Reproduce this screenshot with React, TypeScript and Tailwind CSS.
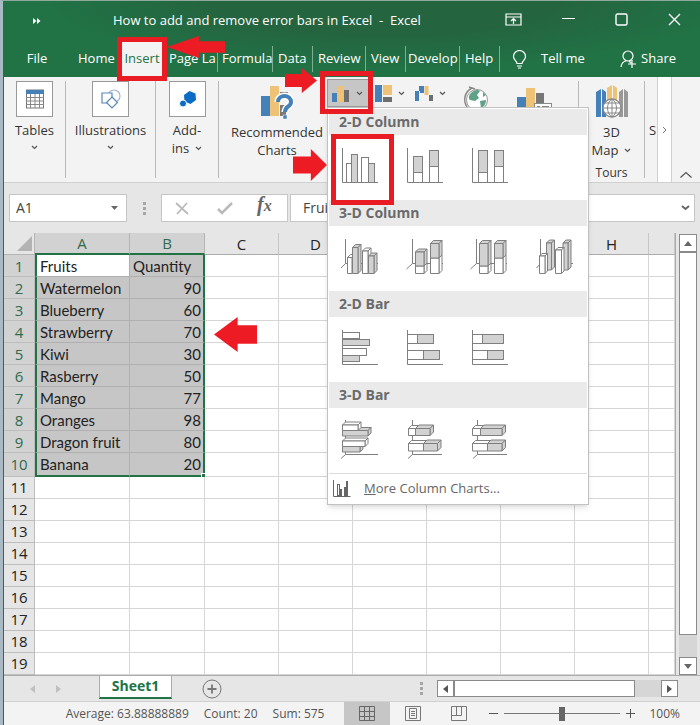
import type { ReactNode } from "react";

const fruits: [string, number][] = [
    ["Watermelon", 90],
    ["Blueberry", 60],
    ["Strawberry", 70],
    ["Kiwi", 30],
    ["Rasberry", 50],
    ["Mango", 77],
    ["Oranges", 98],
    ["Dragon fruit", 80],
    ["Banana", 20],
];

const cells: (string | number)[][] = [["Fruits", "Quantity"], ...fruits];
const columns = ["A", "B", "C", "D", "E", "F", "G", "H", ""];
const rows = Array.from({ length: 19 }, (_, i) => i + 1);

const tabs = [
    { label: "Page La", width: "w-[50px] pl-px" },
    { label: "Formula", width: "w-[55px] pl-1" },
    { label: "Data", width: "w-10 pl-[5px]" },
    { label: "Review", width: "w-[53px] pl-[5px]" },
    { label: "View", width: "w-10 pl-[5px]" },
    { label: "Develop", width: "w-[54px] pl-0.5" },
    { label: "Help", width: "w-10 pl-[5px]" },
];

const STROKE = "#7f7f7f";
const GRAY = "#d2d2d2";

function Chevron({ className = "" }: { className?: string }) {
    return (
        <svg width="7" height="5" viewBox="0 0 7 5" className={`inline-block ${className}`}>
            <path d="M1 1l2.5 2.5L6 1" fill="none" stroke="#555" strokeWidth="1.2" />
        </svg>
    );
}

function Arrow({ className, flip = false }: { className: string; flip?: boolean }) {
    return (
        <svg viewBox="0 0 40 34" preserveAspectRatio="none" className={`pointer-events-none absolute z-30 ${className}`}>
            <path
                d={flip ? "M0 17L22 0V8H40V26H22V34Z" : "M40 17L21 0V8H0V26H21V34Z"}
                fill="#ed1c24"
            />
        </svg>
    );
}

// Chart thumbnails
function Rect({ x, y, x2, y2, fill = "#fff" }: { x: number; y: number; x2: number; y2: number; fill?: string }) {
    return <rect x={x} y={y} width={x2 - x} height={y2 - y} fill={fill} stroke={STROKE} />;
}

function Box({ x, y, x2, y2, fill = "#fff", d = 3 }: { x: number; y: number; x2: number; y2: number; fill?: string; d?: number }) {
    return (
        <g fill={fill} stroke={STROKE} strokeLinejoin="round">
            <path d={`M${x} ${y}l${d} ${-d}H${x2 + d}L${x2} ${y}Z`} />
            <path d={`M${x2} ${y}l${d} ${-d}V${y2 - d}L${x2} ${y2}Z`} />
            <rect x={x} y={y} width={x2 - x} height={y2 - y} />
        </g>
    );
}

function Axis({ d }: { d: string }) {
    return <path d={d} fill="none" stroke={STROKE} />;
}

const sections: { title: string; items: { name: string; art: ReactNode }[] }[] = [
    {
        title: "2-D Column",
        items: [
            {
                name: "Clustered Column",
                art: (
                    <>
                        <Rect x={6.5} y={16.5} x2={11.5} y2={35.5} />
                        <Rect x={11.5} y={7.5} x2={17.5} y2={35.5} fill={GRAY} />
                        <Rect x={21.5} y={10.5} x2={28.5} y2={35.5} />
                        <Rect x={28.5} y={16.5} x2={34.5} y2={35.5} fill={GRAY} />
                        <Axis d="M2.5 1V35.5H38" />
                    </>
                ),
            },
            {
                name: "Stacked Column",
                art: (
                    <>
                        <Rect x={8.5} y={9.5} x2={17.5} y2={25.5} fill={GRAY} />
                        <Rect x={8.5} y={25.5} x2={17.5} y2={35.5} />
                        <Rect x={24.5} y={3.5} x2={33.5} y2={19.5} fill={GRAY} />
                        <Rect x={24.5} y={19.5} x2={33.5} y2={35.5} />
                        <Axis d="M2.5 1V35.5H38" />
                    </>
                ),
            },
            {
                name: "100% Stacked Column",
                art: (
                    <>
                        <Rect x={8.5} y={3.5} x2={17.5} y2={25.5} fill={GRAY} />
                        <Rect x={8.5} y={25.5} x2={17.5} y2={35.5} />
                        <Rect x={24.5} y={3.5} x2={33.5} y2={19.5} fill={GRAY} />
                        <Rect x={24.5} y={19.5} x2={33.5} y2={35.5} />
                        <Axis d="M2.5 1V35.5H38" />
                    </>
                ),
            },
        ],
    },
    {
        title: "3-D Column",
        items: [
            {
                name: "3-D Clustered Column",
                art: (
                    <>
                        <Axis d="M5.5 1V25.5L1 30M5.5 25.5H38" />
                        <Box x={7.5} y={19.5} x2={12} y2={35.5} />
                        <Box x={12.5} y={9.5} x2={18} y2={35.5} fill={GRAY} />
                        <Box x={22.5} y={13} x2={28} y2={35.5} />
                        <Box x={28.5} y={18} x2={34} y2={35.5} fill={GRAY} />
                    </>
                ),
            },
            {
                name: "3-D Stacked Column",
                art: (
                    <>
                        <Axis d="M7.5 1V25.5L1.5 31M7.5 25.5H38" />
                        <Box x={10.5} y={28} x2={19} y2={35.5} />
                        <Box x={10.5} y={14} x2={19} y2={28} fill={GRAY} />
                        <Box x={25.5} y={20} x2={34} y2={35.5} />
                        <Box x={25.5} y={5.5} x2={34} y2={20} fill={GRAY} />
                    </>
                ),
            },
            {
                name: "3-D 100% Stacked Column",
                art: (
                    <>
                        <Axis d="M7.5 1V25.5L1.5 31M7.5 25.5H38" />
                        <Box x={10.5} y={28} x2={19} y2={35.5} />
                        <Box x={10.5} y={5.5} x2={19} y2={28} fill={GRAY} />
                        <Box x={25.5} y={20} x2={34} y2={35.5} />
                        <Box x={25.5} y={5.5} x2={34} y2={20} fill={GRAY} />
                    </>
                ),
            },
            {
                name: "3-D Column",
                art: (
                    <>
                        <Axis d="M6.5 1V25.5L2.5 30M6.5 25.5H39" />
                        <Box x={12.5} y={5} x2={17.5} y2={32} fill={GRAY} />
                        <Box x={29} y={5} x2={34} y2={32} fill={GRAY} />
                        <Box x={5.5} y={18} x2={11} y2={35.5} d={2.5} />
                        <Box x={21.5} y={12} x2={27.5} y2={35.5} d={2.5} />
                    </>
                ),
            },
        ],
    },
    {
        title: "2-D Bar",
        items: [
            {
                name: "Clustered Bar",
                art: (
                    <>
                        <Rect x={2.5} y={3.5} x2={19.5} y2={9.5} />
                        <Rect x={2.5} y={10.5} x2={29.5} y2={16.5} fill={GRAY} />
                        <Rect x={2.5} y={19.5} x2={26.5} y2={26.5} />
                        <Rect x={2.5} y={26.5} x2={19.5} y2={32.5} fill={GRAY} />
                        <Axis d="M2.5 1V35.5H38" />
                    </>
                ),
            },
            {
                name: "Stacked Bar",
                art: (
                    <>
                        <Rect x={2.5} y={5.5} x2={12.5} y2={14.5} />
                        <Rect x={12.5} y={5.5} x2={28.5} y2={14.5} fill={GRAY} />
                        <Rect x={2.5} y={21.5} x2={18.5} y2={30.5} />
                        <Rect x={18.5} y={21.5} x2={34.5} y2={30.5} fill={GRAY} />
                        <Axis d="M2.5 1V35.5H38" />
                    </>
                ),
            },
            {
                name: "100% Stacked Bar",
                art: (
                    <>
                        <Rect x={2.5} y={5.5} x2={12.5} y2={14.5} />
                        <Rect x={12.5} y={5.5} x2={33.5} y2={14.5} fill={GRAY} />
                        <Rect x={2.5} y={21.5} x2={17.5} y2={30.5} />
                        <Rect x={17.5} y={21.5} x2={33.5} y2={30.5} fill={GRAY} />
                        <Axis d="M2.5 1V35.5H38" />
                    </>
                ),
            },
        ],
    },
    {
        title: "3-D Bar",
        items: [
            {
                name: "3-D Clustered Bar",
                art: (
                    <>
                        <Axis d="M5.5 0V34.5L1 38.5M5.5 34.5H38" />
                        <Box x={2.5} y={26.5} x2={20} y2={32} fill={GRAY} />
                        <Box x={2.5} y={21} x2={25} y2={26.5} />
                        <Box x={2.5} y={10.5} x2={28} y2={16} fill={GRAY} />
                        <Box x={2.5} y={5} x2={18} y2={10.5} />
                    </>
                ),
            },
            {
                name: "3-D Stacked Bar",
                art: (
                    <>
                        <Axis d="M7.5 0V34.5L3 38.5M7.5 34.5H37" />
                        <Box x={3.5} y={23.5} x2={18.5} y2={31} />
                        <Box x={18.5} y={23.5} x2={32.5} y2={31} fill={GRAY} d={3.5} />
                        <Box x={3.5} y={8.5} x2={10.5} y2={15.5} />
                        <Box x={10.5} y={8.5} x2={25} y2={15.5} fill={GRAY} d={3.5} />
                    </>
                ),
            },
            {
                name: "3-D 100% Stacked Bar",
                art: (
                    <>
                        <Axis d="M7.5 0V34.5L3 38.5M7.5 34.5H37" />
                        <Box x={2.5} y={23.5} x2={17.5} y2={31} />
                        <Box x={17.5} y={23.5} x2={32} y2={31} fill={GRAY} d={3.5} />
                        <Box x={2.5} y={8.5} x2={10.5} y2={15.5} />
                        <Box x={10.5} y={8.5} x2={32} y2={15.5} fill={GRAY} d={3.5} />
                    </>
                ),
            },
        ],
    },
];

function ChartMenu() {
    return (
        <div className="absolute top-full left-0 z-20 w-[262px] border border-[#c2c2c2] bg-white p-px shadow-md">
            {sections.map((section, i) => (
                <section key={section.title}>
                    <h3 className="h-[26px] bg-[#eaeaea] pl-[10px] text-sm leading-[26px] font-bold text-[#6a6a6a]">
                        {section.title}
                    </h3>
                    <div className="flex h-[65px]">
                        {section.items.map((entry, j) => (
                            <button key={entry.name} aria-label={entry.name} className="relative flex w-[65px] pt-3 pl-[11px]">
                                <svg width="40" height="40" viewBox="0 0 40 40">
                                    {entry.art}
                                </svg>
                                {i === 0 && j === 0 && (
                                    <>
                                        <span className="absolute -top-px left-0.5 h-[71px] w-[63px] border-[5px] border-[#e91c24]" />
                                        <Arrow className="top-[14px] -left-9 h-8 w-[34px]" />
                                    </>
                                )}
                            </button>
                        ))}
                    </div>
                </section>
            ))}
            <button className="flex h-[30px] w-full items-center border-t border-[#dcdcdc] pl-[3px] text-[13px] text-[#666]">
                <svg width="19" height="17" viewBox="0 0 19 17" className="mr-[13px]" fill="#8a8a8a" stroke="#666">
                    <path d="M1.5 0V16.5H18.5" fill="none" />
                    <rect x="5.5" y="4.5" width="2" height="11" fill="#fff" />
                    <rect x="8.5" y="9.5" width="1" height="6" />
                    <rect x="12.5" y="7.5" width="1" height="8" fill="#fff" />
                    <rect x="14.5" y="1.5" width="1" height="14" />
                </svg>
                <span>
                    <span className="underline">M</span>ore Column Charts...
                </span>
            </button>
        </div>
    );
}

function TitleBar() {
    return (
        <header className="bg-[#217346] bg-[radial-gradient(ellipse_at_55%_0%,#24643f_30%,#217346_65%)] text-[13px] text-white">
            <div className="flex h-10 items-center pl-[29px]">
                <svg width="8" height="6" viewBox="0 0 8 6" fill="#fff">
                    <path d="M0 0l3.500 3L0 6zM4 0l3.500 3L4 6z" />
                </svg>
                <h1 className="flex-1 pl-[72px] whitespace-pre">How to add and remove error bars in Excel  -  Excel</h1>
                <div className="flex items-center gap-10 pr-[19px] pb-1">
                    <button aria-label="Ribbon Display Options">
                        <svg width="17" height="13" viewBox="0 0 17 13" fill="none" stroke="#fff" strokeWidth="1.2">
                            <path d="M1 1h15v11H1zM1 4h15M8.500 11V5.500M6 8l2.500-2.500L11 8" />
                        </svg>
                    </button>
                    <button aria-label="Minimize">
                        <svg width="13" height="13" viewBox="0 0 13 13" stroke="#fff">
                            <path d="M0 5.500h13" />
                        </svg>
                    </button>
                    <button aria-label="Maximize">
                        <svg width="13" height="13" viewBox="0 0 13 13" fill="none" stroke="#fff" strokeWidth="1.4">
                            <rect x="1" y="1" width="11" height="11" rx="1.5" />
                        </svg>
                    </button>
                    <button aria-label="Close">
                        <svg width="13" height="13" viewBox="0 0 13 13" stroke="#fff" strokeWidth="1.3">
                            <path d="M1 1l11 11M12 1L1 12" />
                        </svg>
                    </button>
                </div>
            </div>
            <nav className="flex h-9 items-center">
                <button className="w-[66px] text-center">File</button>
                <button className="w-[49px] pl-2 text-left">Home</button>
                <button className="relative mr-[3px] flex h-full w-[46px] items-center justify-center bg-[#f3f3f3] text-[#217346]">
                    Insert
                    <span className="absolute -inset-x-0.5 -top-[4px] -bottom-1 z-10 border-[5px] border-[#e91c24]" />
                    <Arrow flip className="-top-[5px] left-[48px] h-[22px] w-[58px]" />
                </button>
                {tabs.map((tab) => (
                    <button
                        key={tab.label}
                        className={`h-[26px] border-r border-[#7fae93] text-left whitespace-nowrap ${tab.width}`}
                    >
                        {tab.label}
                    </button>
                ))}
                <button className="ml-3 flex items-center gap-[14px] whitespace-nowrap">
                    <svg width="15" height="19" viewBox="0 0 15 19" fill="none" stroke="#fff" strokeWidth="1.2">
                        <path d="M5 13.500C5 11 1.500 10 1.500 6.500a6 6 0 0 1 12 0C13.500 10 10 11 10 13.500zM5 16h5M6 18h3" />
                    </svg>
                    Tell me
                </button>
                <button className="mr-6 ml-auto flex items-center gap-1">
                    <svg width="17" height="18" viewBox="0 0 17 18" fill="none" stroke="#fff" strokeWidth="1.2">
                        <circle cx="8" cy="6" r="5" />
                        <path d="M1 17c.5-4 2-5.500 5-6M9 11l2 2M8 14h8M12 10v8" />
                    </svg>
                    Share
                </button>
            </nav>
        </header>
    );
}

function Group({ label, children, className }: { label: ReactNode; children: ReactNode; className: string }) {
    return (
        <button className={`my-1 flex flex-col items-center border-r border-[#b9b9b9] ${className}`}>
            <span className="flex h-9 w-[37px] items-center justify-center border border-[#999] bg-white">{children}</span>
            <span className="flex flex-col items-center pt-1 leading-[18px]">{label}</span>
        </button>
    );
}

function Ribbon() {
    return (
        <div className="flex h-[106px] border-b border-[#d0d0d0] bg-[#f3f3f3] text-[13px] text-[#333]">
            <Group className="w-[62px]" label={<>Tables<Chevron className="mt-1.5" /></>}>
                <svg width="18" height="20" viewBox="0 0 18 20">
                    <rect x=".5" y="1" width="17" height="18" fill="#fff" stroke="#777" />
                    <path d="M0 1h18v4H0z" fill="#4680b8" />
                    <path d="M0 8.500h18M0 12h18M0 15.500h18M4.500 5v14M9 5v14M13.500 5v14" stroke="#888" />
                </svg>
            </Group>
            <Group className="w-[90px]" label={<>Illustrations<Chevron className="mt-1.5" /></>}>
                <svg width="20" height="20" viewBox="0 0 20 20" fill="#fff" stroke="#5b88b5" strokeWidth="1.2">
                    <circle cx="13" cy="7" r="6" stroke="#9db8d4" />
                    <path d="M1 4h10v10H1z" />
                    <path d="M11 8l5.500 5.500L11 19l-5.500-5.500z" />
                </svg>
            </Group>
            <Group className="w-[63px]" label={<>Add-<span className="flex items-center gap-1.5">ins <Chevron /></span></>}>
                <svg width="17" height="18" viewBox="0 0 17 18" fill="#0a6cc4">
                    <path d="M10.500 1l6 2.500.5 6.500-5.500 4-6-2.500L5 5z" />
                    <circle cx="4" cy="13.500" r="3.500" stroke="#fff" />
                </svg>
            </Group>

            <button className="flex w-[108px] flex-col items-center pt-2 pl-2 leading-[18px]">
                <svg width="34" height="36" viewBox="0 0 34 36" className="mb-0.5">
                    <path d="M1 11h9v20H1z" fill="#4680b8" />
                    <path d="M10 1h9v30h-9z" fill="#eec377" />
                    <path d="M20 7h8v3h-8zM20 20h6v11h-6z" fill="#7a7a7a" />
                    <path d="M18 17c0-8 13-8 13 0 0 5-6 4-6 10" fill="none" stroke="#fff" strokeWidth="7" />
                    <path d="M18 17c0-8 13-8 13 0 0 5-6 4-6 10" fill="none" stroke="#4680b8" strokeWidth="4" />
                    <path d="M23 30h4v4h-4z" fill="#4680b8" stroke="#fff" strokeWidth=".5" />
                </svg>
                Recommended
                <span>Charts</span>
            </button>

            <div className="relative mt-0.5 h-7 w-[42px]">
                <button aria-label="Insert Column or Bar Chart" className="flex h-full w-full items-center gap-1.5 border border-[#999] bg-[#c6c6c6] pl-1">
                    <svg width="18" height="17" viewBox="0 0 18 17">
                        <path d="M0 8h5v9H0z" fill="#4680b8" />
                        <path d="M6 1h5v16H6z" fill="#eec377" />
                        <path d="M12 5h5v12h-5z" fill="#6e6e6e" />
                    </svg>
                    <Chevron />
                </button>
                <ChartMenu />
                <span className="pointer-events-none absolute -top-2 -right-1 -bottom-[7px] -left-[7px] z-20 border-[5px] border-[#e91c24]" />
                <Arrow className="-top-[11px] -left-[42px] h-[25px] w-8" />
            </div>
            <button aria-label="Insert Hierarchy Chart" className="mt-1.5 ml-1.5 flex h-5 items-center gap-1.5">
                <svg width="17" height="17" viewBox="0 0 17 17">
                    <path d="M0 0h7v17H0z" fill="#4680b8" />
                    <path d="M8 0h9v10H8z" fill="#eec377" />
                    <path d="M8 12h9v5H8z" fill="#6e6e6e" />
                </svg>
                <Chevron />
            </button>
            <button aria-label="Insert Waterfall Chart" className="mt-1.5 ml-2.5 flex h-5 items-center gap-1.5">
                <svg width="18" height="17" viewBox="0 0 18 17">
                    <path d="M0 6h4v10H0zM4 1h5v7H5V6H4z" fill="#4680b8" />
                    <path d="M9.500 1h4v9h-4z" fill="#eec377" />
                    <path d="M14 10h4v6h-4z" fill="#6e6e6e" />
                </svg>
                <Chevron />
            </button>
            <button aria-label="Maps" className="mt-2 ml-[17px] h-8">
                <svg width="26" height="30" viewBox="0 0 26 30">
                    <circle cx="14" cy="14" r="10.5" fill="#fff" stroke="#999" />
                    <path d="M8 7c3-3 7-4 9-2l-3 4 2 3-4 3-5-1c-2-2-1-5 1-7zM17 15l6-1c0 4-2 7-5 8zM20 6l3 3-3 2z" fill="#5fa287" />
                    <path d="M9 2C1 6 0 15 4 21M6 1l6 2" fill="none" stroke="#888" strokeWidth="1.5" />
                </svg>
            </button>
            <button aria-label="PivotChart" className="mt-2 ml-7 h-8">
                <svg width="36" height="30" viewBox="0 0 36 30">
                    <path d="M0 11h9v15H0z" fill="#4680b8" />
                    <path d="M9 2h9v24H9z" fill="#eec377" />
                    <path d="M19 7h8v15h-8z" fill="#777" />
                    <rect x="17.5" y="17.5" width="17" height="12" fill="#fff" stroke="#888" />
                    <path d="M20 20.500h3M25 20.500h7" stroke="#888" />
                </svg>
            </button>

            <div className="my-1 ml-auto flex w-[67px] flex-col items-center border-x border-[#b9b9b9]">
                <button className="flex flex-col items-center pt-1 leading-[18px]">
                    <svg width="34" height="34" viewBox="0 0 34 34" className="mb-1">
                        <path d="M1 7l5-3v28H1zM7 4l4 3v25H7z" fill="#4680b8" />
                        <path d="M12 3l5-3v17h-5zM18 0l4 3v14h-4z" fill="#eec377" />
                        <path d="M24 7l4-3v28h-4zM29 4l4 3v25h-4z" fill="#999" />
                        <circle cx="17" cy="23" r="9" fill="#fff" stroke="#888" strokeWidth="1.3" />
                        <path d="M8 23h18M10 18h14M10 28h14M17 14v18M17 14c-6 4-6 14 0 18M17 14c6 4 6 14 0 18" fill="none" stroke="#888" />
                    </svg>
                    3D
                    <span className="flex items-center gap-1.5">Map <Chevron /></span>
                </button>
                <span className="pt-1.5 text-xs">Tours</span>
            </div>
            <span className="w-3 pt-11 pl-1">S</span>
            <button aria-label="Scroll ribbon right" className="flex w-[15px] items-center justify-center border-x border-[#d0d0d0] bg-white">
                <svg width="5" height="8" viewBox="0 0 5 8">
                    <path d="M1 1l3 3-3 3" fill="none" stroke="#777" />
                </svg>
            </button>
            <button aria-label="Collapse the Ribbon" className="flex w-7 items-end justify-center pb-1">
                <svg width="12" height="7" viewBox="0 0 12 7">
                    <path d="M.5 6.500l5.500-5 5.500 5" fill="none" stroke="#555" strokeWidth="1.2" />
                </svg>
            </button>
        </div>
    );
}

function Dots() {
    return (
        <svg width="3" height="13" viewBox="0 0 3 13" fill="#a6a6a6">
            <path d="M0 0h3v3H0zM0 5h3v3H0zM0 10h3v3H0z" />
        </svg>
    );
}

function FormulaBar() {
    return (
        <div className="flex h-[50px] items-start pt-[11px] pr-[5px] pl-[5px]">
            <div className="flex h-7 w-[118px] items-center border border-[#c6c6c6] bg-white pr-2 pl-1.5">
                <input aria-label="Name Box" defaultValue="A1" className="w-full min-w-0 bg-transparent text-sm text-[#444] outline-none" />
                <svg width="7" height="4" viewBox="0 0 7 4" fill="#666" className="shrink-0">
                    <path d="M0 0h7L3.500 4z" />
                </svg>
            </div>
            <div className="flex h-7 w-[34px] items-center justify-center">
                <Dots />
            </div>
            <div className="flex h-7 w-[127px] items-center border border-[#c6c6c6] bg-white pl-[13px]">
                <button aria-label="Cancel">
                    <svg width="14" height="13" viewBox="0 0 14 13">
                        <path d="M1 1l12 11M12 1L2 12" stroke="#b9b9b9" strokeWidth="1.8" />
                    </svg>
                </button>
                <button aria-label="Enter" className="ml-7">
                    <svg width="16" height="13" viewBox="0 0 16 13">
                        <path d="M1 7l4 4L15 1" fill="none" stroke="#b9b9b9" strokeWidth="2.5" />
                    </svg>
                </button>
                <button className="ml-6 pb-1 font-['Liberation_Serif',serif] text-xl leading-none font-bold text-[#666] italic">
                    f<span className="text-base">x</span>
                </button>
            </div>
            <div className="ml-0.5 flex h-7 min-w-0 flex-1 items-center border border-[#c6c6c6] bg-white pr-1 pl-3">
                <input aria-label="Formula Bar" defaultValue="Fruits" className="min-w-0 flex-1 text-sm text-[#444] outline-none" />
                <svg width="9" height="6" viewBox="0 0 9 6">
                    <path d="M1 1l3.500 3L8 1" fill="none" stroke="#666" strokeWidth="2" />
                </svg>
            </div>
        </div>
    );
}

function headStyle(col: number) {
    if (col < 2) return "border-r border-b-2 border-[#b5b5b5] border-b-[#217346] bg-[#d2d2d2] text-[#2f6b4c]";
    return "border-r border-b border-[#c6c6c6] border-b-[#ababab]";
}

function cellStyle(row: number, col: number) {
    if (row > 10 || col > 1) return "border-r border-b border-[#d6d6d6] bg-white";
    const fill = row === 1 && col === 0 ? "bg-white" : "bg-[#c6c6c6]";
    const line = row === 10 ? "border-b-2 border-b-[#217346]" : "border-b border-b-[#b0b0b0]";
    const side =
        col === 0
            ? "border-l-2 border-l-[#217346] border-r border-r-[#b0b0b0]"
            : "border-r-2 border-r-[#217346]";
    return `${fill} ${line} ${side}`;
}

function Sheet() {
    return (
        <div className="relative flex min-h-0 flex-1 border-b border-[#ababab]">
            <table className="h-full min-w-0 flex-1 table-fixed border-separate border-spacing-0 border-r border-[#ababab] text-[#222]">
                <colgroup>
                    <col className="w-[31px]" />
                    <col className="w-[95px]" />
                    <col className="w-[75px]" />
                    <col className="w-[74px]" />
                    <col className="w-[74px]" />
                    <col className="w-[74px]" />
                    <col className="w-[74px]" />
                    <col className="w-[74px]" />
                    <col className="w-[74px]" />
                    <col />
                </colgroup>
                <thead>
                    <tr className="h-[22px] text-[15px] leading-5">
                        <th aria-label="Select all" className="border-r border-b border-[#b5b5b5] p-0">
                            <svg width="15" height="15" viewBox="0 0 15 15" className="mr-0.5 ml-auto">
                                <path d="M15 0v15H0z" fill="#b3b3b3" />
                            </svg>
                        </th>
                        {columns.map((name, col) => (
                            <th key={col} scope="col" className={`p-0 font-normal ${headStyle(col)}`}>
                                {name}
                            </th>
                        ))}
                    </tr>
                </thead>
                <tbody>
                    {rows.map((row) => (
                        <tr key={row} className="text-[15px] leading-5">
                            <th
                                scope="row"
                                className={`border-r border-b border-[#bdbdbd] p-0 font-normal ${row <= 10 ? "bg-[#d2d2d2] text-[#2f6b4c]" : ""}`}
                            >
                                {row}
                            </th>
                            {columns.map((_, col) => {
                                const value = cells[row - 1]?.[col];
                                return (
                                    <td
                                        key={col}
                                        className={`relative py-0 pr-0.5 pl-[3px] font-[Lato,sans-serif] ${cellStyle(row, col)} ${typeof value === "number" ? "text-right" : "text-left"}`}
                                    >
                                        {value}
                                        {row === 10 && col === 1 && (
                                            <span className="absolute -right-[3px] -bottom-[3px] size-[5px] border border-white bg-[#217346]" />
                                        )}
                                    </td>
                                );
                            })}
                        </tr>
                    ))}
                </tbody>
            </table>
            <div className="mx-[3px] mt-px flex w-[18px] flex-col bg-[#d6d6d6]">
                <button aria-label="Scroll up" className="flex h-[18px] items-center justify-center border border-[#8a8a8a] bg-white">
                    <svg width="8" height="5" viewBox="0 0 8 5" fill="#666">
                        <path d="M4 0l4 5H0z" />
                    </svg>
                </button>
                <div className="min-h-0 flex-1 border border-[#8a8a8a] bg-white" />
                <div className="h-[22px]" />
                <button aria-label="Scroll down" className="flex h-[18px] items-center justify-center border border-[#8a8a8a] bg-white">
                    <svg width="8" height="5" viewBox="0 0 8 5" fill="#666">
                        <path d="M4 5l4-5H0z" />
                    </svg>
                </button>
            </div>
            <Arrow flip className="top-[84px] left-[210px] h-[35px] w-[43px]" />
        </div>
    );
}

function SheetTabs() {
    return (
        <div className="flex h-[26px] items-center border-b border-[#d0d0d0]">
            <button aria-label="Previous sheet" className="ml-[26px]">
                <svg width="5" height="8" viewBox="0 0 5 8" fill="#c0c0c0"><path d="M5 0v8L0 4z" /></svg>
            </button>
            <button aria-label="Next sheet" className="ml-[21px]">
                <svg width="5" height="8" viewBox="0 0 5 8" fill="#c0c0c0"><path d="M0 0v8l5-4z" /></svg>
            </button>
            <button className="-mt-1 ml-[38px] h-6 w-[73px] border-x border-b-2 border-x-[#ababab] border-b-[#217346] bg-white text-sm leading-5 font-bold text-[#217346]">
                Sheet1
            </button>
            <button aria-label="New sheet" className="ml-[30px]">
                <svg width="20" height="20" viewBox="0 0 20 20" fill="none" stroke="#777">
                    <circle cx="10" cy="10" r="9" />
                    <path d="M5.500 10h9M10 5.500v9" strokeWidth="1.8" />
                </svg>
            </button>
            <div className="ml-auto flex items-center pr-[22px]">
                <Dots />
                <button aria-label="Scroll left" className="ml-[14px] flex h-[17px] w-[17px] items-center justify-center border border-[#8a8a8a] bg-white">
                    <svg width="5" height="8" viewBox="0 0 5 8" fill="#555"><path d="M5 0v8L0 4z" /></svg>
                </button>
                <div className="h-[17px] w-[181px] border border-[#8a8a8a] bg-white" />
                <div className="h-[17px] w-[26px] bg-[#d6d6d6]" />
                <button aria-label="Scroll right" className="flex h-[17px] w-[17px] items-center justify-center border border-[#8a8a8a] bg-white">
                    <svg width="5" height="8" viewBox="0 0 5 8" fill="#555"><path d="M0 0v8l5-4z" /></svg>
                </button>
            </div>
        </div>
    );
}

function StatusBar() {
    return (
        <footer className="flex h-[23px] items-center bg-[#f3f3f3] text-xs text-[#555]">
            <div className="ml-auto flex gap-[15px] pr-5 whitespace-nowrap">
                <span>Average: 63.88888889</span>
                <span>Count: 20</span>
                <span>Sum: 575</span>
            </div>
            <button aria-label="Normal" className="flex h-full w-[46px] items-center justify-center bg-[#c6c6c6]">
                <svg width="16" height="15" viewBox="0 0 16 15" fill="none" stroke="#666">
                    <path d="M.5 .5h15v14H.5zM5.500 0v15M10.500 0v15M0 5.500h16M0 10.500h16" />
                </svg>
            </button>
            <button aria-label="Page Layout" className="flex w-[46px] justify-center">
                <svg width="16" height="15" viewBox="0 0 16 15" fill="none" stroke="#777">
                    <path d="M.5 .5h15v14H.5zM4.500 2.500h7v10h-7zM6 5.500h4M6 7.500h4M6 9.500h4" />
                </svg>
            </button>
            <button aria-label="Page Break Preview" className="flex w-[46px] justify-center">
                <svg width="16" height="15" viewBox="0 0 16 15" fill="none" stroke="#777">
                    <path d="M.5 .5h15v14H.5zM5.500 0v9.500M10.500 0v9.500M0 9.500h10.500" />
                </svg>
            </button>
            <button aria-label="Zoom out" className="ml-[7px]">
                <svg width="9" height="9" viewBox="0 0 9 9" stroke="#555"><path d="M0 4.500h9" /></svg>
            </button>
            <input
                type="range"
                aria-label="Zoom"
                defaultValue={50}
                className="mx-1.5 h-3.5 w-[116px] appearance-none bg-[linear-gradient(#777,#777)] bg-[length:100%_1px] bg-center bg-no-repeat [&::-webkit-slider-thumb]:h-3.5 [&::-webkit-slider-thumb]:w-1.5 [&::-webkit-slider-thumb]:appearance-none [&::-webkit-slider-thumb]:bg-[#666]"
            />
            <button aria-label="Zoom in">
                <svg width="9" height="9" viewBox="0 0 9 9" stroke="#555"><path d="M0 4.500h9M4.500 0v9" /></svg>
            </button>
            <span className="pr-5 pl-[14px]">100%</span>
        </footer>
    );
}

export default function App() {
    return (
        <div className="flex h-screen min-h-[600px] flex-col overflow-hidden border-t border-l-[3px] border-t-[#8fa99c] border-l-[#a9bac4] bg-[#e6e6e6] font-['Open_Sans','Noto_Sans',sans-serif]">
            <div className="flex min-h-0 flex-1 flex-col border-l border-[#217346]">
                <TitleBar />
                <Ribbon />
                <FormulaBar />
                <Sheet />
                <SheetTabs />
                <StatusBar />
            </div>
        </div>
    );
}
